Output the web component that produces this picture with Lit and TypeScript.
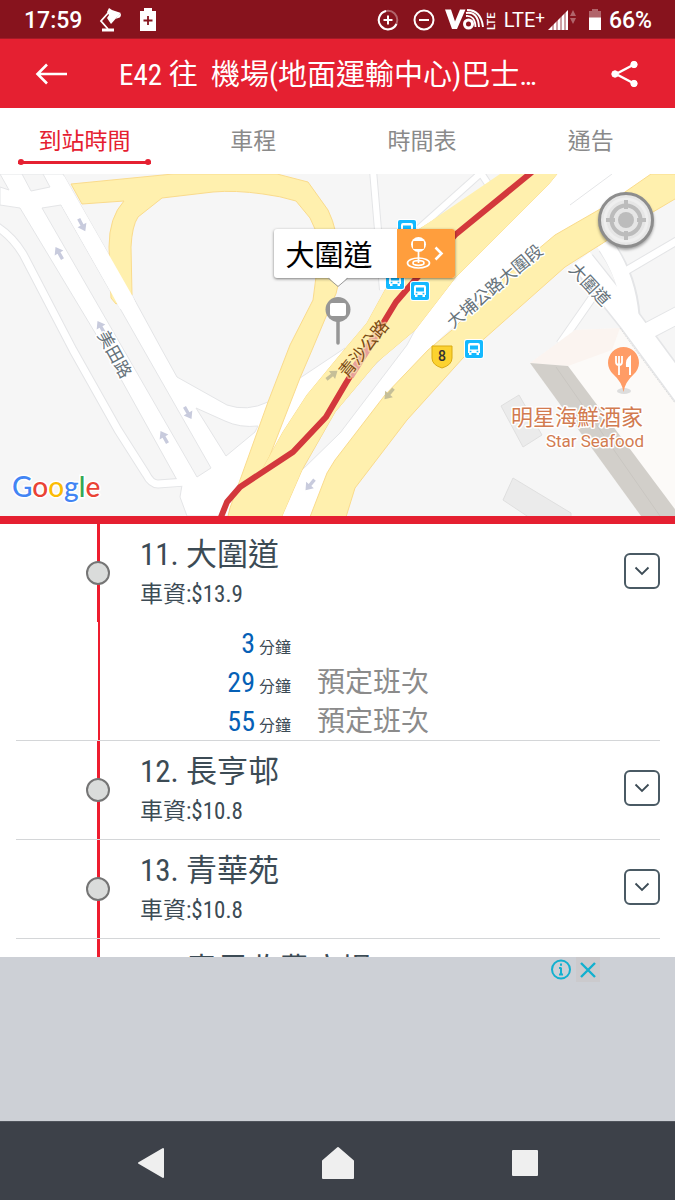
import { LitElement, html, svg, css } from "lit";
import { customElement, property, state } from "lit/decorators.js";
import { classMap } from "lit/directives/class-map.js";

interface Eta {
  minutes: number;
  note: string;
}

interface Stop {
  seq: number;
  name: string;
  fare: string;
  etas: Eta[];
}

const STOPS: Stop[] = [
  {
    seq: 11,
    name: "大圍道",
    fare: "13.9",
    etas: [
      { minutes: 3, note: "" },
      { minutes: 29, note: "預定班次" },
      { minutes: 55, note: "預定班次" },
    ],
  },
  { seq: 12, name: "長亨邨", fare: "10.8", etas: [] },
  { seq: 13, name: "青華苑", fare: "10.8", etas: [] },
  { seq: 14, name: "青馬收費廣場", fare: "10.8", etas: [] },
];

const TABS = ["到站時間", "車程", "時間表", "通告"];

@customElement("status-bar")
class StatusBar extends LitElement {
  static styles = css`
    :host {
      display: flex;
      align-items: center;
      height: 39px;
      padding: 2px 23px 0 24px;
      background: #87131d;
      color: #fff;
      font: 500 23px/37px Roboto, sans-serif;
      border-bottom: 1px solid #a51a26;
      box-sizing: border-box;
    }
    svg {
      display: block;
      fill: #fff;
    }
    .left,
    .right {
      display: flex;
      align-items: center;
    }
    .left {
      gap: 17px;
    }
    .right {
      margin-left: auto;
    }
    .net {
      font-weight: 400;
      font-size: 20px;
      display: flex;
      margin: 0 3px 0 7px;
    }
    .plus {
      font-size: 17px;
      line-height: 30px;
    }
    .line {
      fill: none;
      stroke: #fff;
      stroke-width: 2;
    }
    .dim {
      opacity: 0.35;
    }
    .lte {
      font: 500 11px Roboto, sans-serif;
    }
    .gap {
      margin-right: 14px;
    }
    .battery {
      margin: 0 8px 0 13px;
    }
  `;

  render() {
    return html`
      <div class="left">
        <span>17:59</span>
        <svg width="24" height="24" viewBox="0 0 24 24">
          <path d="M3 20.500h12v3H3z" />
          <path d="M10 4 2 13l7 8" fill="none" stroke="#fff" stroke-width="1.800" />
          <path d="M8 4 10 0l3 2 9 3-2 2-8 9-4-6 2-3z" />
          <path d="M19 10q3 0 3-4-3 0-5 5z" />
        </svg>
        <svg width="16" height="24" viewBox="0 0 16 24">
          <path d="M4 0h8v3h4v20H0V3h4z" />
          <path d="M3.500 12.500h9M8 8v9" stroke="#87131d" stroke-width="1.800" />
        </svg>
      </div>
      <div class="right">
        <svg class="gap" width="22" height="22" viewBox="0 0 22 22">
          <circle class="line dim" cx="11" cy="11" r="9.300" />
          <path class="line" d="M9 2a9.300 9.300 0 1 0 10.500 13" />
          <path class="line" d="M6.500 11h9M11 6.500v9" />
        </svg>
        <svg width="22" height="22" viewBox="0 0 22 22">
          <circle class="line" cx="11" cy="11" r="9.500" />
          <path class="line" d="M6 11h10" />
        </svg>
        <svg width="62" height="24" viewBox="0 0 62 24">
          <path d="M10 1.500h6l4 12 5-12h5.500L22 21h-5z" />
          <circle cx="33.500" cy="16" r="4" fill="none" stroke="#fff" stroke-width="3" />
          <path d="M31 8q9-1 9.500 11M31 5q12-2 13 14M32 2q14 0 16 17" fill="none" stroke="#fff" stroke-width="1.900" />
          <text class="lte" transform="translate(60 22) rotate(-90)">LTE</text>
        </svg>
        <span class="net">LTE<span class="plus">+</span></span>
        <svg width="28" height="22" viewBox="0 0 28 22">
          <path d="M20 1v20H0z" />
          <path d="M5 13v8M9 9v12M13 5v16M17 2v19" stroke="#87131d" stroke-width=".800" />
          <path class="dim" d="M25 1l3 6h-6zM25 15l3-6h-6z" />
        </svg>
        <svg class="battery" width="12" height="22" viewBox="0 0 12 22">
          <path class="dim" d="M3 0h6v2h3v7H0V2h3z" />
          <path d="M0 8.500h12V21H0z" />
        </svg>
        <span>66%</span>
      </div>
    `;
  }
}

@customElement("route-map")
class RouteMap extends LitElement {
  static styles = css`
    :host {
      display: block;
      position: relative;
      height: 342px;
      overflow: hidden;
      background: #f6f6f6;
      border-bottom: 8px solid #e52031;
      font-family: "Noto Sans CJK TC", sans-serif;
    }
    .canvas {
      display: block;
      width: 100%;
      height: 100%;
    }
    .edge {
      fill: none;
      stroke: #e4e5e7;
      stroke-linejoin: round;
    }
    .road {
      fill: none;
      stroke: #fff;
      stroke-linejoin: round;
    }
    .white {
      fill: #fff;
    }
    .land {
      fill: #f6f6f6;
      stroke: #e4e5e7;
    }
    .highway {
      fill: #fff0ae;
      stroke: #fadb8c;
    }
    .block {
      fill: #ebebeb;
      stroke: #dfdfdf;
    }
    .label {
      fill: #66727a;
      stroke: #fff;
      stroke-width: 3px;
      paint-order: stroke;
      stroke-linejoin: round;
      font-size: 17px;
    }
    .brown {
      fill: #7b4a12;
      stroke: #fff0ae;
      stroke-opacity: 0.6;
    }
    .poi {
      fill: #d27b50;
      font-size: 22px;
      text-anchor: end;
    }
    .latin {
      font-family: Roboto, sans-serif;
      font-size: 17px;
    }
    .shield {
      font: 500 14px Roboto, sans-serif;
      text-anchor: middle;
      fill: #333;
    }
    .logo {
      font: 500 28px Lato, sans-serif;
      stroke: #fff;
      stroke-width: 3px;
      paint-order: stroke;
    }
    .blue {
      fill: #4285f4;
    }
    .red {
      fill: #ea4335;
    }
    .amber {
      fill: #fbbc05;
    }
    .green {
      fill: #34a853;
    }
    .callout {
      position: absolute;
      left: calc(50% - 64px);
      top: 55px;
      display: flex;
      height: 49px;
      padding: 0;
      border: 0;
      border-radius: 3px;
      background: #fff;
      color: #000;
      font: 400 29px/49px "Noto Sans CJK TC", sans-serif;
      box-shadow: 0 1px 3px rgba(0, 0, 0, 0.5);
    }
    .place {
      padding: 0 24px 0 12px;
    }
    .go {
      display: block;
      width: 58px;
      height: 49px;
      border-radius: 0 3px 3px 0;
      background: #ff9e3d;
    }
    .tip {
      position: absolute;
      left: 52px;
      top: 48px;
      width: 24px;
      height: 11px;
    }
    .locate {
      position: absolute;
      top: 18px;
      right: 21px;
      width: 56px;
      height: 56px;
      padding: 0;
      border: 3px solid #8d8d8d;
      border-radius: 50%;
      background: #e6e6e6;
      box-shadow: 0 2px 3px rgba(0, 0, 0, 0.35);
    }
    .locate svg {
      display: block;
      width: 100%;
      height: 100%;
    }
  `;

  private bus(x: number, y: number) {
    return svg`<g transform="translate(${x} ${y})">
      <rect x="-1" y="-1" width="20" height="20" rx="3" fill="#fff" />
      <rect width="18" height="18" rx="2" fill="#14b9ff" />
      <path d="M5 3h8q2 0 2 2v8h-1v2h-2.500v-2h-5v2H4v-2H3V5q0-2 2-2z" fill="#fff" />
      <path d="M5 5.500h8v4H5zM4.700 10.800h1.700v1.400H4.700zM11.600 10.800h1.700v1.400h-1.700z" fill="#14b9ff" />
    </g>`;
  }

  private arrow(x: number, y: number, angle: number, color: string) {
    return svg`<path transform="translate(${x} ${y}) rotate(${angle})" d="M-7-1.700h7V-5l7 5-7 5V1.700h-7z" fill=${color} />`;
  }

  render() {
    return html`
      <svg class="canvas" viewBox="0 174 675 342" preserveAspectRatio="xMidYMid slice" role="img" aria-label="地圖">
        <path class="edge" stroke-width="9" d="M-4 226 Q12 236 23 254 L73 350 118 430 146 474Q151 484 158 484L184 482" />
        <path class="edge" stroke-width="8" d="M373 170 383 290M492 190 481 173 415 232" />
        <path class="road" stroke-width="6" d="M373 170 383 290M492 190 481 173 415 232" />
        <path d="M0 187 9 190 0 174H63L132 295 162 350 177 377 227 405Q247 412 268 402L300 378 345 348V408L290 470 282 516H187L180 497 182 485 177 480 97 336 20 208 0 205z" fill="#fff" stroke="#e4e5e7" />
        <path class="road" stroke-width="7" d="M-4 226 Q12 236 23 254 L73 350 118 430 146 474Q151 484 158 484L186 482" />
        <path class="land" d="M22 174 31 191 50 187 43 174zM42 208 61 205 211 468 197 477zM196 408 226 456 255 432 258 426Q240 428 225 421z" />

        <path class="white" d="M557 174H655L602 208 505 277 428 350 335 460 310 516H275L302 470 335 412 390 350 455 278z" />
        <path class="edge" d="M612 174 570 205M310 516 327 500" />
        <path class="land" d="M302 470 335 412 372 368 392 348 415 330 407 345 340 433z" />

        <path class="highway" d="M71 184 173 174H277L308 182 328 210Q338 230 339 260T333 300L312 350 300 378 267 463 280 516H228L230 508 268 402 290 345 313 300Q320 255 315 229L310 218 296 201Q280 196 263 194 235 190 213 192L162 198 138 217Q132 226 131 247L132 295 116 304 111 298 109 247Q109 217 124 201L82 204z" />
        <path class="highway" d="M507 174 418 230 367 323 340 355 307 395 283 432 262 470 242 516H282L302 470 335 412 377 362 415 330 455 278 505 228 548 185 557 174z" />
        <path d="M500 174H557L548 185 505 228 455 278 415 330 377 362 335 412 303 467 282 516H229L240 480 262 470 283 432 307 395 340 355 367 323 418 230z" fill="#fff0ae" />
        <path class="highway" d="M651 174H680V196L653 212 595 248 565 267 485 338 463 358 407 420 355 488 346 517H310L327 473 335 460 385 395 428 350 452 330 505 277 555 235 602 208z" />
        <path class="white" d="M64 176 133 297 136 304 120 309 112 294 62 206 58 186z" />

        <path class="edge" stroke-width="25" d="M583 262 631 322 690 402" />
        <path class="edge" stroke-width="18" d="M606 246Q631 280 632 325M642 334 680 314" />
        <path class="edge" stroke-width="9" d="M624 272 680 239M592 298 560 344" />
        <path class="road" stroke-width="22" d="M581 259 631 322 690 402" />
        <path class="road" stroke-width="16" d="M604 243Q630 280 631 325M638 336 680 314" />
        <path class="road" stroke-width="7" d="M624 272 680 239M592 298 560 344" />

        <path d="M530 363 552 347 575 330 620 328 675 403V516H641z" fill="#fcfaf8" />
        <path d="M530 363 552 347 575 330 620 328 612 350 568 366z" fill="#fbf4f0" />
        <path class="block" d="M501 406 519 395 542 435 523 447zM513 478 571 513V518H530L503 500z" />
        <path d="M620 328 632 345 675 403" fill="none" stroke="#ddd" stroke-dasharray="2 1" />
        <path d="M530 363 568 366 680 516H641z" fill="#d2cfca" />
        <path d="M556 367 660 516" stroke="#c9c6c1" fill="none" />

        ${this.arrow(82, 225, 62, "#c8cbdd")} ${this.arrow(59, 253, 240, "#c8cbdd")}
        ${this.arrow(101, 327, 240, "#c8cbdd")} ${this.arrow(188, 413, 60, "#c8cbdd")}
        ${this.arrow(164, 437, 240, "#c8cbdd")} ${this.arrow(310, 485, 130, "#c8cbdd")}
        ${this.arrow(332, 375, -38, "#c6bf98")} ${this.arrow(389, 394, 130, "#c6bf98")}

        <path d="M532 172 455 235 415 280 396 302 382 325 346 383 326 417 293 452 240 487 227 502 221 517" fill="none" stroke="#d3383c" stroke-width="6" stroke-linejoin="round" />
        <path d="M380 328 364 354 350 376" fill="none" stroke="#e7a09c" stroke-width="8" />

        <text class="label" transform="translate(453 329) rotate(-40)">大埔公路大圍段</text>
        <text class="label" transform="translate(568 270) rotate(47)">大圍道</text>
        <text class="label" transform="translate(97 335) rotate(61)">美田路</text>
        <text class="label brown" transform="translate(347 379) rotate(-51)">青沙公路</text>
        <text class="label poi" x="643" y="425">明星海鮮酒家</text>
        <text class="label poi latin" x="644" y="447">Star Seafood</text>

        ${this.bus(398, 220)} ${this.bus(386, 271)} ${this.bus(411, 282)} ${this.bus(465, 340)}

        <path d="M432 346h20v12q0 7-10 10-10-3-10-10z" fill="#fcd22f" stroke="#d9aa13" />
        <text class="shield" x="442" y="361">8</text>

        <ellipse cx="624" cy="391" rx="7" ry="3" fill="#ddd" />
        <path d="M623.500 392Q622 382 613 374A15.500 15.500 0 1 1 634 374Q625 382 623.500 392z" fill="#ff9c66" />
        <path d="M616 356v6q0 3 3 3v10M619 356v9M622 356v6q0 3-3 3" fill="none" stroke="#fff" stroke-width="1.800" />
        <path d="M631 355v20h-2v-8h-3q-1-9 5-12z" fill="#fff" />

        <path d="M338 318V343" stroke="#969696" stroke-width="3.500" stroke-linecap="round" />
        <circle cx="338" cy="309.500" r="12.500" fill="#969696" />
        <rect x="330" y="303" width="16" height="13" rx="2" fill="#fff" />

        <text class="logo" x="12" y="497"><tspan class="blue">G</tspan><tspan class="red">o</tspan><tspan class="amber">o</tspan><tspan class="blue">g</tspan><tspan class="green">l</tspan><tspan class="red">e</tspan></text>
      </svg>
      <button class="callout" type="button">
        <span class="place">大圍道</span>
        <svg class="go" viewBox="0 0 58 49" fill="none" stroke="#fff" stroke-width="1.700">
          <ellipse cx="21.500" cy="34" rx="11" ry="5" />
          <ellipse cx="21.500" cy="34" rx="5.500" ry="2.300" />
          <circle cx="21.500" cy="15.500" r="7.500" fill="#fff" stroke="none" />
          <rect x="16" y="12" width="11" height="8" rx="1" fill="#ff9e3d" stroke="none" />
          <path d="M21.500 22v12" />
          <path d="M38.500 18.500 44.500 24.500 38.500 30.500" stroke-width="2.600" />
        </svg>
        <svg class="tip" viewBox="0 0 24 11">
          <path d="M2 0h20l-10 9z" fill="#fff" />
          <path d="M2 1 12 9.500 22 1" fill="none" stroke="#9a9a9a" />
        </svg>
      </button>
      <button class="locate" type="button" aria-label="定位">
        <svg viewBox="0 0 50 50" fill="none" stroke="#bcbcbc">
          <circle cx="25" cy="25" r="21" stroke="#efefef" stroke-width="3" />
          <circle cx="25" cy="25" r="14.500" stroke-width="4" />
          <circle cx="25" cy="25" r="8" fill="#bcbcbc" stroke="none" />
          <path d="M25 5v9M25 36v9M5 25h9M36 25h9" stroke-width="4" />
        </svg>
      </button>
    `;
  }
}

@customElement("stop-row")
class StopRow extends LitElement {
  @property({ attribute: false }) stop!: Stop;

  static styles = css`
    :host {
      display: flex;
      margin: 0 15px 0 16px;
      padding-left: 70px;
      border-bottom: 1px solid #d4d6d8;
      color: #3c4b55;
      font-family: "Roboto Condensed", "Noto Sans CJK TC", Roboto, sans-serif;
      font-weight: 400;
    }
    .rail {
      display: flex;
      flex-direction: column;
      width: 24px;
      margin-right: 30px;
    }
    .stem {
      display: flex;
      align-items: center;
      height: 98px;
      background: linear-gradient(#ee1c2e, #ee1c2e) 11px 0 / 3px 100% no-repeat;
    }
    .tail {
      flex: 1;
      background: linear-gradient(#ee1c2e, #ee1c2e) 12px 0 / 2px 100% no-repeat;
    }
    .dot {
      width: 24px;
      height: 24px;
      box-sizing: border-box;
      border: 2px solid #757575;
      border-radius: 50%;
      background: #dadcdb;
    }
    .body {
      flex: 1;
      min-width: 0;
    }
    .head {
      display: flex;
      align-items: flex-start;
      height: 98px;
    }
    .text {
      flex: 1;
      min-width: 0;
      padding-top: 11px;
      white-space: nowrap;
    }
    .name {
      margin: 0;
      font-size: 31px;
      font-weight: 400;
      line-height: 40px;
    }
    .fare {
      margin: 0;
      font-size: 23px;
      line-height: 40px;
    }
    .toggle {
      width: 36px;
      height: 36px;
      margin-top: 29px;
      padding: 0;
      border: 2px solid #4a5a64;
      border-radius: 6px;
      background: #fff;
    }
    .toggle svg {
      display: block;
      margin: 0 auto;
    }
    .etas {
      margin: 0;
      padding: 1px 0 0;
      list-style: none;
    }
    .eta {
      display: grid;
      grid-template-columns: 115px 32px 1fr;
      column-gap: 4px;
      align-items: baseline;
      height: 39px;
      line-height: 42px;
      white-space: nowrap;
    }
    .minutes {
      text-align: right;
      color: #0560b6;
      font-size: 28px;
    }
    .unit {
      font-size: 16px;
    }
    .note {
      padding-left: 22px;
      color: #8b8b8b;
      font-size: 28px;
    }
  `;

  render() {
    const { seq, name, fare, etas } = this.stop;
    return html`
      <div class="rail">
        <div class="stem"><span class="dot"></span></div>
        <div class="tail"></div>
      </div>
      <div class="body">
        <div class="head">
          <div class="text">
            <h2 class="name">${seq}. ${name}</h2>
            <p class="fare">車資:$${fare}</p>
          </div>
          <button class="toggle" type="button" aria-label="展開 ${name}">
            <svg width="16" height="10" viewBox="0 0 16 10">
              <path d="M1.500 1.500 8 8l6.500-6.500" fill="none" stroke="#3c4b55" stroke-width="1.800" />
            </svg>
          </button>
        </div>
        ${etas.length
          ? html`<ul class="etas">
              ${etas.map(
                (e) => html`<li class="eta">
                  <span class="minutes">${e.minutes}</span>
                  <span class="unit">分鐘</span>
                  <span class="note">${e.note}</span>
                </li>`
              )}
            </ul>`
          : null}
      </div>
    `;
  }
}

@customElement("app-root")
class AppRoot extends LitElement {
  @state() private active = 0;

  static styles = css`
    :host {
      display: flex;
      flex-direction: column;
      height: 100vh;
      overflow: hidden;
      background: #fff;
      font-family: "Roboto Condensed", "Noto Sans CJK TC", Roboto, sans-serif;
    }
    status-bar,
    route-map,
    .header,
    .tabs,
    .ad,
    .nav {
      flex-shrink: 0;
    }
    button {
      padding: 0;
      border: 0;
      background: none;
      font: inherit;
      color: inherit;
    }
    svg {
      display: block;
    }
    .header {
      display: flex;
      align-items: center;
      height: 69px;
      padding: 0 36px 0 35px;
      background: #e52031;
      color: #fff;
    }
    .title {
      flex: 1;
      min-width: 0;
      margin: 0 64px 0 52px;
      padding-top: 3px;
      overflow: hidden;
      white-space: pre;
      text-overflow: ellipsis;
      font-size: 29px;
      font-weight: 400;
      line-height: 66px;
    }
    .tabs {
      display: grid;
      grid-template-columns: repeat(4, 1fr);
      height: 66px;
    }
    .tab {
      display: grid;
      grid-template-rows: 51px 6px 9px;
      padding: 0 18px;
      color: #8a8a8a;
      font-size: 23px;
      line-height: 68px;
    }
    .tab.on {
      color: #e52031;
    }
    .mark {
      display: none;
      align-items: center;
      justify-content: space-between;
      background: linear-gradient(#e52031, #e52031) 0 50% / 100% 3px no-repeat;
    }
    .on .mark {
      display: flex;
    }
    .bead {
      width: 6px;
      height: 6px;
      border-radius: 50%;
      background: #e52031;
    }
    .stops {
      flex: 1;
      min-height: 0;
      overflow: hidden;
    }
    .ad {
      display: flex;
      justify-content: flex-end;
      align-items: flex-start;
      gap: 4px;
      height: 164px;
      padding-right: 75px;
      box-sizing: border-box;
      background: #cdd0d6;
    }
    .close {
      background: #cbcacd;
    }
    .nav {
      display: grid;
      grid-template-columns: repeat(3, 1fr);
      place-items: center;
      height: 79px;
      padding: 4px 57px 0;
      box-sizing: border-box;
      border-top: 1px solid #50545c;
      background: #3d4149;
    }
    .key {
      fill: #efefef;
      stroke: #efefef;
      stroke-width: 2;
      stroke-linejoin: round;
    }
  `;

  render() {
    return html`
      <status-bar></status-bar>
      <header class="header">
        <button type="button" aria-label="返回">
          <svg width="32" height="22" viewBox="0 0 32 22" fill="none" stroke="#fff" stroke-width="2.600">
            <path d="M12 1.500 2.500 11 12 20.500M2.500 11H32" />
          </svg>
        </button>
        <h1 class="title">E42 往  機場(地面運輸中心)巴士總站</h1>
        <button type="button" aria-label="分享">
          <svg width="28" height="28" viewBox="0 0 28 28" fill="#fff" stroke="#fff">
            <path d="M23 4.500 5 14l18 9.500" fill="none" stroke-width="2.400" />
            <circle cx="23" cy="4.500" r="3.200" />
            <circle cx="4" cy="14" r="3.200" />
            <circle cx="23" cy="23.500" r="3.200" />
          </svg>
        </button>
      </header>
      <nav class="tabs">
        ${TABS.map(
          (t, i) => html`<button
            type="button"
            class=${classMap({ tab: true, on: i === this.active })}
            @click=${() => (this.active = i)}
          >
            <span>${t}</span>
            <span class="mark"><span class="bead"></span><span class="bead"></span></span>
          </button>`
        )}
      </nav>
      <route-map></route-map>
      <main class="stops">${STOPS.map((s) => html`<stop-row .stop=${s}></stop-row>`)}</main>
      <aside class="ad">
        <button type="button" aria-label="廣告資訊">
          <svg width="22" height="24" viewBox="0 0 22 24" fill="none" stroke="#12b0cf" stroke-width="2">
            <circle cx="11" cy="12.500" r="9" />
            <path d="M11 10.500v7M9 11h2M9 17.500h4M11 6.500v2.200" />
          </svg>
        </button>
        <button class="close" type="button" aria-label="關閉廣告">
          <svg width="24" height="25" viewBox="0 0 24 25" fill="none" stroke="#12b0cf" stroke-width="2.400">
            <path d="M5 6 19 20M19 6 5 20" />
          </svg>
        </button>
      </aside>
      <nav class="nav">
        <button type="button" aria-label="上一頁">
          <svg class="key" width="28" height="32" viewBox="0 0 28 32"><path d="M2 16 26 2v28z" /></svg>
        </button>
        <button type="button" aria-label="主畫面">
          <svg class="key" width="34" height="34" viewBox="0 0 34 34"><path d="M17 2 32 15v17H2V15z" /></svg>
        </button>
        <button type="button" aria-label="最近使用">
          <svg class="key" width="28" height="28" viewBox="0 0 28 28"><path d="M2 2h24v24H2z" /></svg>
        </button>
      </nav>
    `;
  }
}
